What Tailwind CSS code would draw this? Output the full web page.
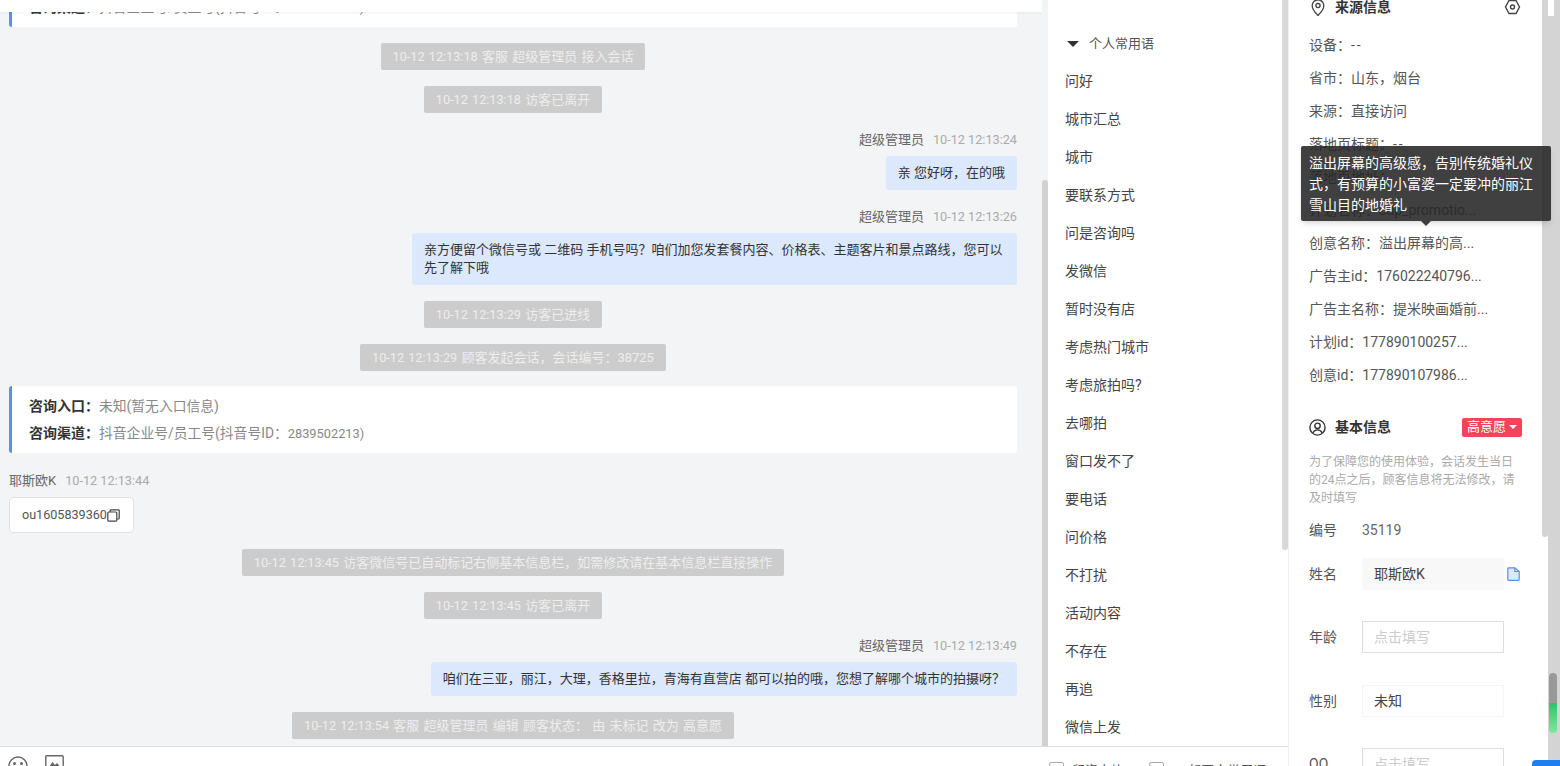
<!DOCTYPE html>
<html lang="zh-CN">
  <head>
    <meta charset="UTF-8" />
    <meta name="viewport" content="width=device-width, initial-scale=1.0" />
    <title>会话详情</title>
    <script src="https://cdn.jsdelivr.net/npm/@tailwindcss/browser@4"></script>
  </head>
  <body class="h-screen overflow-hidden bg-white font-['Roboto','Noto_Sans_CJK_SC',sans-serif] text-[#333]">
    <div class="flex h-[766px] overflow-hidden">
      <!-- Chat column -->
      <div class="flex w-[1048px] shrink-0 flex-col">
        <div class="flex h-[746px] shrink-0 bg-[#f3f4f6]">
          <div class="relative flex w-[1042px] flex-col overflow-hidden">
            <div class="relative z-10 h-[12px] w-full shrink-0 bg-white shadow-[0_1px_3px_rgba(0,0,0,0.06)]"></div>
            <div class="-mt-[52px] flex flex-col gap-[16px] pl-[9px] pr-[25px]">
              <!-- Entry card (scrolled away) -->
              <div class="h-[67px] shrink-0 rounded-[3px] border-l-[3px] border-[#5b8fe8] bg-white pl-[17px] pt-[7px] text-[14px] leading-[27px]">
                <div><b class="font-bold">咨询入口：</b><span class="text-[13.8px] text-[#888]">未知(暂无入口信息)</span></div>
                <div><b class="font-bold">咨询渠道：</b><span class="text-[13.8px] text-[#888]">抖音企业号/员工号(抖音号ID：<span class="text-[12.800px]">2839502213)</span></span></div>
              </div>

              <div class="self-center rounded-[2px] bg-[#ccc] px-[12px] text-[13px] leading-[27px] text-[#eee] [word-spacing:1px]"><span class="text-[12.7px]">10-12 12:13:18</span> 客服 超级管理员 接入会话</div>
              <div class="self-center rounded-[2px] bg-[#ccc] px-[12px] text-[13px] leading-[27px] text-[#eee] [word-spacing:1px]"><span class="text-[12.7px]">10-12 12:13:18</span> 访客已离开</div>

              <div class="flex flex-col items-end">
                <div class="mb-[7px] flex h-[20px] items-center gap-[9px] pt-[2px] text-[13px] text-[#666]">超级管理员 <span class="text-[12.7px] text-[#aaa]">10-12 12:13:24</span></div>
                <div class="rounded-[3px] bg-[#dbe8fd] px-[12px] text-[13px] leading-[34px]">亲 您好呀，在的哦</div>
              </div>

              <div class="flex flex-col items-end">
                <div class="mb-[7px] flex h-[20px] items-center gap-[9px] pt-[2px] text-[13px] text-[#666]">超级管理员 <span class="text-[12.7px] text-[#aaa]">10-12 12:13:26</span></div>
                <div class="w-[605px] rounded-[3px] bg-[#dbe8fd] px-[12px] py-[8px] text-[13px] leading-[18px]">亲方便留个微信号或 二维码 手机号吗？咱们加您发套餐内容、价格表、主题客片和景点路线，您可以先了解下哦</div>
              </div>

              <div class="self-center rounded-[2px] bg-[#ccc] px-[12px] text-[13px] leading-[27px] text-[#eee] [word-spacing:1px]"><span class="text-[12.7px]">10-12 12:13:29</span> 访客已进线</div>
              <div class="self-center rounded-[2px] bg-[#ccc] px-[12px] text-[13px] leading-[27px] text-[#eee] [word-spacing:1px]"><span class="text-[12.7px]">10-12 12:13:29</span> 顾客发起会话，会话编号：38725</div>

              <div class="-mt-[1px] mb-[1px] h-[67px] shrink-0 rounded-[3px] border-l-[3px] border-[#5b8fe8] bg-white pl-[17px] pt-[7px] text-[14px] leading-[27px]">
                <div><b class="font-bold">咨询入口：</b><span class="text-[13.8px] text-[#888]">未知(暂无入口信息)</span></div>
                <div><b class="font-bold">咨询渠道：</b><span class="text-[13.8px] text-[#888]">抖音企业号/员工号(抖音号ID：<span class="text-[12.800px]">2839502213)</span></span></div>
              </div>

              <div class="flex flex-col items-start">
                <div class="mb-[7px] flex h-[20px] items-center gap-[9px] pt-[2px] text-[13px] text-[#666]">耶斯欧K <span class="text-[12.7px] text-[#aaa]">10-12 12:13:44</span></div>
                <div class="flex h-[36px] items-center rounded-[4px] border border-[#e2e2e2] bg-white pl-[12px] pr-[13px] text-[12.6px] text-[#555]">
                  ou1605839360
                  <svg class="h-[13px] w-[13px] text-[#444]" viewBox="0 0 13 13" fill="none" stroke="currentColor" stroke-width="1.2"><rect x="0.8" y="3" width="9" height="9.2" rx="1"/><path d="M3.2 3V1.6a.8.8 0 0 1 .8-.8h7.400a.8.8 0 0 1 .8.8v7.600a.8.8 0 0 1-.8.8H10"/></svg>
                </div>
              </div>

              <div class="self-center rounded-[2px] bg-[#ccc] px-[12px] text-[13px] leading-[27px] text-[#eee] [word-spacing:1px]"><span class="text-[12.7px]">10-12 12:13:45</span> 访客微信号已自动标记右侧基本信息栏，如需修改请在基本信息栏直接操作</div>
              <div class="self-center rounded-[2px] bg-[#ccc] px-[12px] text-[13px] leading-[27px] text-[#eee] [word-spacing:1px]"><span class="text-[12.7px]">10-12 12:13:45</span> 访客已离开</div>

              <div class="flex flex-col items-end">
                <div class="mb-[7px] flex h-[20px] items-center gap-[9px] pt-[2px] text-[13px] text-[#666]">超级管理员 <span class="text-[12.7px] text-[#aaa]">10-12 12:13:49</span></div>
                <div class="rounded-[3px] bg-[#dbe8fd] px-[12px] text-[13px] leading-[34px]">咱们在三亚，丽江，大理，香格里拉，青海有直营店 都可以拍的哦，您想了解哪个城市的拍摄呀？</div>
              </div>

              <div class="self-center rounded-[2px] bg-[#ccc] px-[12px] text-[13px] leading-[27px] text-[#eee] [word-spacing:1px]"><span class="text-[12.7px]">10-12 12:13:54</span> 客服 超级管理员 编辑 顾客状态： 由 未标记 改为 高意愿</div>
            </div>
          </div>
          <!-- Chat scrollbar -->
          <div class="flex w-[6px] flex-col">
            <div class="h-[180px] shrink-0"></div>
            <div class="flex-1 rounded-t-[3px] bg-[#d1d1d1]"></div>
          </div>
        </div>
        <!-- Composer -->
        <div class="flex flex-1 gap-[17px] border-t border-[#ddd] pl-[8px] pt-[9px] text-[#666]">
          <svg class="h-[20px] w-[20px] shrink-0" viewBox="0 0 20 20" fill="none" stroke="currentColor" stroke-width="1.4"><circle cx="10" cy="10" r="9"/><circle cx="6.500" cy="7.500" r="0.8" fill="currentColor"/><circle cx="13.500" cy="7.500" r="0.8" fill="currentColor"/></svg>
          <svg class="-mt-[1px] h-[20px] w-[19px] shrink-0" viewBox="0 0 19 20" fill="none" stroke="currentColor" stroke-width="1.4"><rect x="0.8" y="0.8" width="17.400" height="18" rx="1"/><path d="M4 12l3.500-5 2.500 3 2-2 3.500 4z" fill="currentColor" stroke="none"/></svg>
        </div>
      </div>

      <!-- Quick phrases -->
      <div class="flex w-[241px] shrink-0 flex-col border-r border-[#eee]">
        <div class="flex h-[746px] shrink-0">
          <div class="w-[234px] overflow-hidden pl-[17px]">
            <div class="mt-[34px] flex h-[20px] items-center gap-[10px] text-[13px] text-[#555]">
              <span class="ml-[2px] h-0 w-0 border-x-[6px] border-t-[6px] border-x-transparent border-t-[#333]"></span>
              个人常用语
            </div>
            <ul class="mt-[7.500px] text-[14px] leading-[38px] text-[#444]">
              <li>问好</li>
              <li>城市汇总</li>
              <li>城市</li>
              <li>要联系方式</li>
              <li>问是咨询吗</li>
              <li>发微信</li>
              <li>暂时没有店</li>
              <li>考虑热门城市</li>
              <li>考虑旅拍吗?</li>
              <li>去哪拍</li>
              <li>窗口发不了</li>
              <li>要电话</li>
              <li>问价格</li>
              <li>不打扰</li>
              <li>活动内容</li>
              <li>不存在</li>
              <li>再追</li>
              <li>微信上发</li>
            </ul>
          </div>
          <div class="h-[550px] w-[6px] rounded-b-[3px] bg-[#d8d8d8]"></div>
        </div>
        <div class="flex flex-1 gap-[25px] border-t border-[#ddd] pl-[1px] pt-[15px] text-[13px] leading-[18px] text-[#555]">
          <div class="flex gap-[8px]"><span class="h-[14px] w-[15px] rounded-[2px] border border-[#aaa]"></span>留资卡片</div>
          <div class="flex gap-[8px]"><span class="h-[14px] w-[15px] rounded-[2px] border border-[#aaa]"></span>※ 起图文常用语</div>
        </div>
      </div>

      <!-- Visitor info -->
      <div class="relative flex flex-1 overflow-hidden">
        <div class="w-[253px] shrink-0 pl-[20px] pr-[20px] text-[14px] text-[#555]">
          <div class="-mt-[3px] flex h-[20px] items-center justify-between">
            <div class="flex items-center gap-[10px] font-bold text-[#333]">
              <svg class="ml-[2px] h-[17px] w-[14px] text-[#444]" viewBox="2 0 12 15.500" fill="none" stroke="currentColor" stroke-width="1.2"><path d="M8 15S2.700 10 2.700 6a5.300 5.300 0 0 1 10.600 0C13.300 10 8 15 8 15z"/><circle cx="8" cy="6" r="1.900"/></svg>
              来源信息
            </div>
            <svg class="mr-[1px] h-[16px] w-[17px] text-[#444]" viewBox="0 0 17 16" fill="none" stroke="currentColor" stroke-width="1.4"><path d="M5 1.500h7l3.500 6.500-3.500 6.500H5L1.500 8z"/><circle cx="8.500" cy="8" r="2"/></svg>
          </div>
          <div class="mt-[12px] flex flex-col leading-[33px]">
            <div>设备：<span class="tracking-[2px]">--</span></div>
            <div>省市：山东，烟台</div>
            <div>来源：直接访问</div>
            <div>落地页标题：<span class="tracking-[2px]">--</span></div>
            <div>落地页地址：</div>
            <div>计划名称：cdp_promotio...</div>
            <div>创意名称：溢出屏幕的高...</div>
            <div>广告主id：176022240796...</div>
            <div>广告主名称：提米映画婚前...</div>
            <div>计划id：177890100257...</div>
            <div>创意id：177890107986...</div>
          </div>

          <div class="mt-[25px] flex h-[20px] items-center justify-between">
            <div class="flex items-center gap-[9px] font-bold text-[#333]">
              <svg class="h-[17px] w-[17px] text-[#333]" viewBox="0 0 17 17" fill="none" stroke="currentColor" stroke-width="1.4"><circle cx="8.500" cy="8.500" r="7.600"/><circle cx="8.500" cy="6.800" r="2.700"/><path d="M3.800 14c1-2.300 2.700-3.100 4.700-3.100s3.700.8 4.700 3.100"/></svg>
              基本信息
            </div>
            <div class="flex h-[19px] w-[60px] items-center justify-center gap-[3px] rounded-[2px] bg-[#f6425a] text-[13px] text-[#fff]">
              高意愿
              <span class="h-0 w-0 border-x-[4px] border-t-[4px] border-x-transparent border-t-white"></span>
            </div>
          </div>
          <p class="mt-[16px] text-[12px] leading-[18px] text-[#aaa]">为了保障您的使用体验，会话发生当日的24点之后，顾客信息将无法修改，请及时填写</p>

          <div class="mt-[13px] flex h-[20px] items-center"><span class="w-[53px]">编号</span><span class="text-[#666]">35119</span></div>

          <div class="mt-[18px] flex items-center">
            <span class="w-[53px]">姓名</span>
            <div class="flex h-[32px] w-[142px] items-center rounded-[2px] bg-[#f8f8f8] pl-[12px] text-[14px] text-[#444]">耶斯欧K</div>
            <svg class="ml-[3px] h-[14px] w-[13px] text-[#5b8fe8]" viewBox="0 0 13 14" fill="#dbe8fd" stroke="currentColor" stroke-width="1.2"><path d="M1.600.8h6.200L12.200 4.500v8a.8.8 0 0 1-.8.8H1.600a.8.8 0 0 1-.8-.8V1.600a.8.8 0 0 1 .8-.8z"/><path d="M7.800.8v3.700h4.400" fill="none"/></svg>
          </div>

          <div class="mt-[31px] flex items-center">
            <span class="w-[53px]">年龄</span>
            <div class="flex h-[32px] w-[142px] items-center border border-[#ddd] pl-[11px] text-[14px] text-[#ccc]">点击填写</div>
          </div>

          <div class="mt-[32px] flex items-center">
            <span class="w-[53px]">性别</span>
            <div class="flex h-[32px] w-[142px] items-center border border-[#f5f5f5] pl-[11px] text-[14px] text-[#444]">未知</div>
          </div>

          <div class="mt-[31px] flex items-center">
            <span class="w-[53px]">QQ</span>
            <div class="flex h-[32px] w-[142px] items-center border border-[#ddd] pl-[11px] text-[14px] text-[#ccc]">点击填写</div>
          </div>
        </div>

        <!-- Panel scrollbars -->
        <div class="h-[537px] w-[6px] shrink-0 rounded-b-[3px] bg-[#d4d4d4]"></div>
        <div class="flex flex-1 flex-col bg-[#d4d4d4]">
          <div class="h-[16px] w-[6px] bg-white"></div>
          <div class="ml-[1px] mt-[657px] flex h-[60px] w-[8px] flex-col overflow-hidden rounded-[4px]">
            <div class="h-[30px] bg-[#999]"></div>
            <div class="flex-1 bg-gradient-to-b from-[#25c468] to-[#7be89d]"></div>
          </div>
        </div>

        <!-- Tooltip -->
        <div class="absolute left-[12px] top-[146px] w-[250px] rounded-[2px] bg-[#262626]/88 pb-[5px] pl-[8px] pr-[16px] pt-[7px] text-[14px] leading-[21px] text-white shadow-md">
          溢出屏幕的高级感，告别传统婚礼仪式，有预算的小富婆一定要冲的丽江雪山目的地婚礼
          <span class="absolute left-[120px] top-full h-0 w-0 border-x-[5px] border-t-[5px] border-x-transparent border-t-[#262626]/88"></span>
        </div>
        <!-- Corner button -->
        <div class="absolute bottom-0 right-0 h-[6px] w-[28px] rounded-tl-[4px] bg-[#1e7ff0]"></div>
      </div>
    </div>
  </body>
</html>
